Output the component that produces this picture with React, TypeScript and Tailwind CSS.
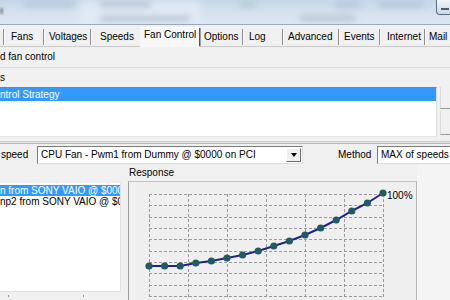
const pts = [84, 84, 84, 81, 79, 76, 73, 69, 64, 59, 53, 46, 38, 29, 21, 11];

function Sep() {
  return (
    <div className="w-[2px] h-[16px] flex shrink-0">
      <div className="w-[1px] h-full bg-[#8c8c8c]" />
      <div className="w-[1px] h-full bg-white" />
    </div>
  );
}

function Tab({ w, pl, label }: { w: number; pl: number; label: string }) {
  return (
    <div className="flex items-center shrink-0" style={{ width: w }}>
      <Sep />
      <span className="whitespace-nowrap" style={{ paddingLeft: pl }}>
        {label}
      </span>
    </div>
  );
}

function Chart() {
  const vx = [0, 1, 2, 3, 4, 5, 6].map((i) => 20 + 39 * i);
  const hy = [0, 1, 2, 3, 4, 5, 6, 7, 8, 9].map((j) => 12 + 11.33 * j);
  const px = pts.map((_, i) => 20 + 15.6 * i);
  return (
    <svg width="287" height="117" className="block">
      {vx.map((x) => (
        <line key={"v" + x} x1={x + 0.5} y1={12} x2={x + 0.5} y2={117} stroke="#9a9a9a" strokeWidth="1" strokeDasharray="3 2" />
      ))}
      {hy.map((y) => (
        <line key={"h" + y} x1={20} y1={Math.round(y) + 0.5} x2={254} y2={Math.round(y) + 0.5} stroke="#9a9a9a" strokeWidth="1" strokeDasharray="3 2" />
      ))}
      <polyline points={pts.map((y, i) => `${px[i]},${y}`).join(" ")} fill="none" stroke="#22228a" strokeWidth="2" />
      {pts.map((y, i) => (
        <circle key={i} cx={px[i]} cy={y} r="3.6" fill="#1f5c62" />
      ))}
      <text x="258" y="17" fontSize="10" fill="#000" fontFamily="Liberation Sans, Arial, sans-serif">
        100%
      </text>
    </svg>
  );
}

export default function App() {
  return (
    <div className="w-[450px] h-[300px] overflow-hidden bg-[#f0f0f0] text-[10px] leading-none text-black font-['Liberation_Sans',Arial,sans-serif] flex flex-col">
      {/* title bar (aero glass) */}
      <div className="relative h-[25px] shrink-0 overflow-hidden bg-gradient-to-b from-[#c6d7e9] via-[#d4e1ef] to-[#dde7f2] border-b border-[#98a9bd]">
        <div className="absolute left-[25px] top-[2px] w-[50px] h-[4px] bg-[#93a5bb] blur-[3px] opacity-50" />
        <div className="absolute left-[80px] top-0 w-[120px] h-[24px] bg-[#e6eef7] blur-[4px] opacity-70" />
        <div className="absolute left-[100px] top-[2px] w-[50px] h-[5px] bg-[#8596ab] blur-[3px] opacity-50" />
        <div className="absolute left-[100px] top-[16px] w-[90px] h-[5px] bg-[#8798ad] blur-[3px] opacity-50" />
        <div className="absolute left-[240px] top-[2px] w-[15px] h-[4px] bg-[#7fb3a0] blur-[3px] opacity-50" />
        <div className="absolute left-[300px] top-[16px] w-[55px] h-[5px] bg-[#8a9bb0] blur-[3px] opacity-50" />
        <div className="absolute left-[335px] top-[3px] w-[25px] h-[4px] bg-[#92a3b8] blur-[3px] opacity-50" />
        <div className="absolute left-[378px] top-[3px] w-[45px] h-[4px] bg-[#92a3b8] blur-[3px] opacity-50" />
        <div className="absolute left-0 top-[8px] w-[3px] h-[6px] bg-[#707070] blur-[1px] opacity-70" />
        <div className="absolute right-0 top-0 w-[14px] h-[15px] rounded-bl-[4px] border-l border-b border-[#5d6e83] bg-gradient-to-b from-[#f2f6fa] to-[#cbd8e6] flex items-center justify-end pr-[1px]">
          <div className="w-[8px] h-[2px] bg-[#4d5d70] mt-[3px]" />
        </div>
      </div>

      {/* tabs */}
      <div className="h-[22px] shrink-0 flex items-center border-b border-[#c9c9c9] pt-[2px]">
        <div className="w-[3px] shrink-0" />
        <Tab w={40} pl={6} label="Fans" />
        <Tab w={47} pl={4} label="Voltages" />
        <Tab w={50} pl={8} label="Speeds" />
        <div className="w-[59px] h-[20px] shrink-0 flex items-center bg-[#f7f7f7] border-t border-white">
          <span className="pl-[4px] -mt-[4px] whitespace-nowrap">Fan Control</span>
        </div>
        <div className="w-[43px] flex items-center shrink-0">
          <div className="w-[2px] h-[18px] flex shrink-0">
            <div className="w-[1px] h-full bg-[#555]" />
            <div className="w-[1px] h-full bg-[#a0a0a0]" />
          </div>
          <span className="pl-[3px]">Options</span>
        </div>
        <Tab w={40} pl={5} label="Log" />
        <Tab w={56} pl={4} label="Advanced" />
        <Tab w={41} pl={4} label="Events" />
        <Tab w={45} pl={6} label="Internet" />
        <Tab w={30} pl={3} label="Mail" />
      </div>

      {/* checkbox row */}
      <div className="h-[21px] shrink-0 flex items-center border-b border-[#dcdcdc]">
        <span className="-mt-[1px]">d fan control</span>
      </div>

      {/* label */}
      <div className="h-[19px] shrink-0 pt-[5px]">
        <span>s</span>
      </div>

      {/* strategies list + buttons */}
      <div className="h-[50px] shrink-0 flex">
        <div className="w-[437px] shrink-0 bg-white border-t border-r border-b border-t-[#7d838d] border-r-[#dcdcdc] border-b-[#e3e3e3]">
          <div className="h-[13px] bg-[#3399ff] text-white flex items-center">
            <span>ntrol Strategy</span>
          </div>
        </div>
        <div className="ml-[3px] flex-1 flex flex-col">
          <div className="h-[22px] border-l border-b border-[#9a9a9a] border-l-[#dadada]" />
          <div className="mt-[2px] h-[24px] border-l border-b border-[#9a9a9a] border-l-[#dadada]" />
        </div>
      </div>

      {/* splitter */}
      <div className="h-[4px] shrink-0" />
      <div className="h-[3px] shrink-0 border-t border-[#d0d0d0] bg-[#e2e2e2] border-b border-b-[#b9b9b9]" />
      <div className="h-[2px] shrink-0" />

      {/* combobox row */}
      <div className="h-[18px] shrink-0 flex items-center">
        <span className="w-[37px] shrink-0 pl-[1px]">speed</span>
        <div className="w-[266px] h-[18px] shrink-0 bg-white border border-t-[#7a7a7a] border-l-[#7a7a7a] border-r-[#dcdcdc] border-b-[#dcdcdc] flex items-center">
          <span className="pl-[3px] flex-1 whitespace-nowrap">CPU Fan - Pwm1 from Dummy @ $0000 on PCI</span>
          <div className="w-[15px] h-[14px] mr-[1px] bg-[#f0f0f0] border border-t-white border-l-white border-r-[#6a6a6a] border-b-[#6a6a6a] flex items-center justify-center">
            <div className="w-0 h-0 border-l-[3.5px] border-r-[3.5px] border-t-[4px] border-l-transparent border-r-transparent border-t-black" />
          </div>
        </div>
        <span className="w-[74px] shrink-0 pl-[35px]">Method</span>
        <div className="flex-1 h-[18px] bg-white border border-t-[#7a7a7a] border-l-[#7a7a7a] border-r-0 border-b-[#dcdcdc] flex items-center overflow-hidden">
          <span className="pl-[3px] whitespace-nowrap">MAX of speeds</span>
        </div>
      </div>

      {/* bottom */}
      <div className="flex-1 flex min-h-0">
        <div className="w-[128px] shrink-0 flex flex-col pt-[19px]">
          <div className="w-[121px] h-[109px] bg-white border-r border-b border-r-[#e0e0e0] border-b-[#e0e0e0] pt-[2px] whitespace-nowrap overflow-hidden">
            <div className="h-[11px] bg-[#3399ff] text-white flex items-center">
              <span>n from SONY VAIO @ $000</span>
            </div>
            <div className="h-[12px] flex items-center">
              <span>np2 from SONY VAIO @ $0</span>
            </div>
          </div>
          <div className="flex h-[5px] items-end">
            <div className="ml-[8px] w-[1px] h-[2px] bg-[#909090]" />
            <div className="ml-[74px] w-[1px] h-[2px] bg-[#909090]" />
          </div>
        </div>
        <div className="w-[289px] shrink-0 flex flex-col">
          <div className="h-[17px] shrink-0 flex items-end pl-[1px] pb-[3px]">
            <span>Response</span>
          </div>
          <div className="flex-1 bg-[#efefef] border-l border-t border-r border-l-[#9c9c9c] border-t-[#c4c4c4] border-r-[#b4b4b4]">
            <Chart />
          </div>
        </div>
        <div className="flex-1 bg-[#f4f4f4]" />
      </div>
    </div>
  );
}
